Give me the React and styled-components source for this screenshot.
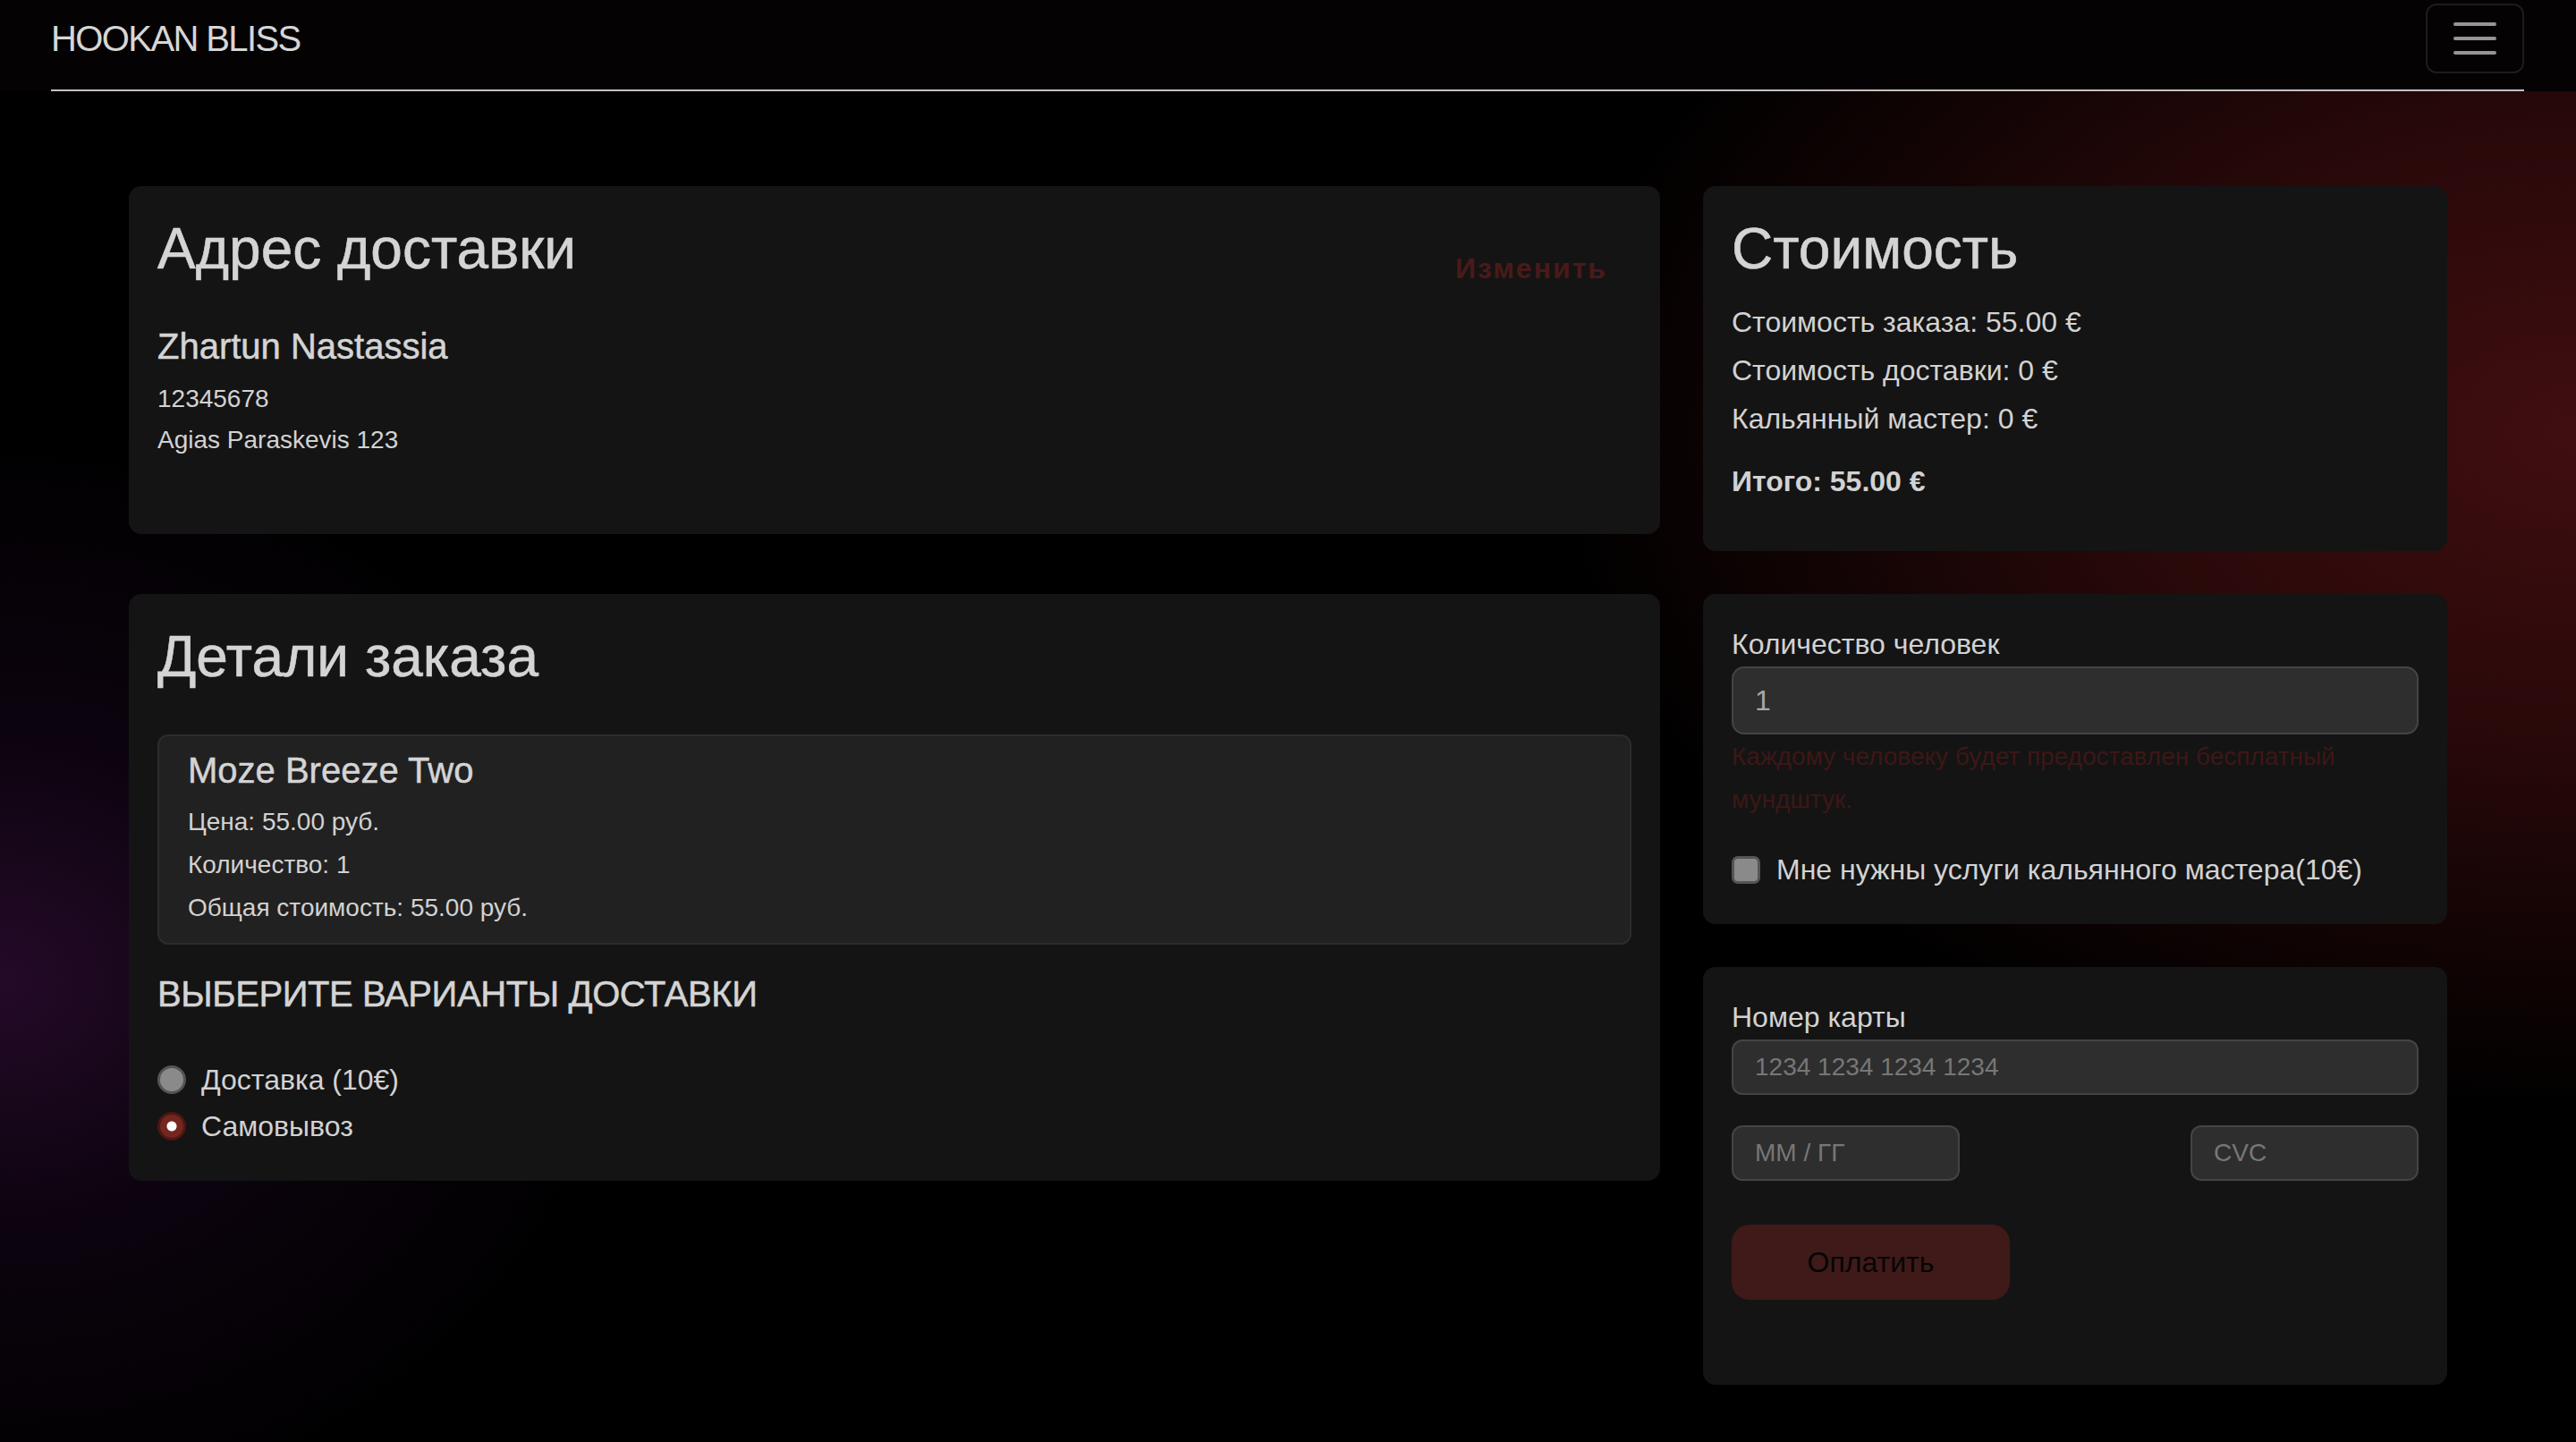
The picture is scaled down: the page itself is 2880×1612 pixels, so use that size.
import React from "react";
import styled, { createGlobalStyle } from "styled-components";

const GlobalStyle = createGlobalStyle`
  * { box-sizing: border-box; }
  body {
    margin: 0;
    background: #000;
    color: #d2d2d2;
    font-family: "Liberation Sans", Arial, sans-serif;
  }
`;

const App = () => {
  return (
    <Page>
      <GlobalStyle />
      <Navbar>
        <NavInner>
          <Brand>HOOKAN BLISS</Brand>
          <Toggler aria-label="menu">
            <svg width="60" height="60" viewBox="0 0 30 30">
              <path
                d="M4 7h22M4 15h22M4 23h22"
                stroke="rgba(255,255,255,0.58)"
                strokeWidth="2"
                strokeLinecap="round"
              />
            </svg>
          </Toggler>
        </NavInner>
      </Navbar>

      <Container>
        <Card $pb={82}>
          <CardHead>
            <Title $mb={47}>Адрес доставки</Title>
            <EditLink>Изменить</EditLink>
          </CardHead>
          <Name>Zhartun Nastassia</Name>
          <AddrLine>12345678</AddrLine>
          <AddrLine>Agias Paraskevis 123</AddrLine>
        </Card>

        <Card $pb={54}>
          <Title $mb={20}>Стоимость</Title>
          <CostLine>Стоимость заказа: 55.00 €</CostLine>
          <CostLine>Стоимость доставки: 0 €</CostLine>
          <CostLine>Кальянный мастер: 0 €</CostLine>
          <Total>Итого: 55.00 €</Total>
        </Card>

        <Card $pb={37}>
          <Title $mb={49}>Детали заказа</Title>
          <Item>
            <ItemName>Moze Breeze Two</ItemName>
            <ItemLine>Цена: 55.00 руб.</ItemLine>
            <ItemLine>Количество: 1</ItemLine>
            <ItemLine>Общая стоимость: 55.00 руб.</ItemLine>
          </Item>
          <SectionTitle>Выберите варианты доставки</SectionTitle>
          <CheckRow $gap={17} $mb={4}>
            <Radio type="radio" name="delivery" />
            Доставка (10€)
          </CheckRow>
          <CheckRow $gap={17}>
            <Radio type="radio" name="delivery" defaultChecked />
            Самовывоз
          </CheckRow>
        </Card>

        <Stack>
          <Card $pb={37}>
            <Label>Количество человек</Label>
            <BigInput type="text" defaultValue="1" />
            <Hint>Каждому человеку будет предоставлен бесплатный мундштук.</Hint>
            <CheckRow $gap={18} $mt={30}>
              <Checkbox type="checkbox" />
              Мне нужны услуги кальянного мастера(10€)
            </CheckRow>
          </Card>

          <Card $pb={95}>
            <Label>Номер карты</Label>
            <CardInput type="text" placeholder="1234 1234 1234 1234" />
            <CardRow>
              <CardInput type="text" placeholder="MM / ГГ" />
              <CardInput type="text" placeholder="CVC" />
            </CardRow>
            <PayButton>Оплатить</PayButton>
          </Card>
        </Stack>
      </Container>
    </Page>
  );
};

const Page = styled.div`
  min-height: 100vh;
  padding-bottom: 60px;
  background:
    radial-gradient(ellipse 1150px 760px at 100% 30%, rgba(64, 14, 16, 1) 0%, rgba(48, 10, 11, 0.85) 45%, rgba(0, 0, 0, 0) 100%),
    radial-gradient(ellipse 720px 620px at 0% 68%, rgba(36, 10, 40, 1) 0%, rgba(20, 5, 24, 0.6) 45%, rgba(0, 0, 0, 0) 100%),
    #000;
`;

const Navbar = styled.nav`
  padding: 0 58px 0 57px;
  background: #050203;
`;

const NavInner = styled.div`
  height: 102px;
  padding-bottom: 14px;
  display: flex;
  align-items: center;
  justify-content: space-between;
  border-bottom: 2px solid rgba(235, 225, 225, 0.85);
`;

const Brand = styled.a`
  font-size: 40px;
  letter-spacing: -1.6px;
  color: #d6d6d6;
`;

const Toggler = styled.button`
  width: 110px;
  height: 78px;
  display: flex;
  align-items: center;
  justify-content: center;
  background: transparent;
  border: 2px solid rgba(255, 255, 255, 0.1);
  border-radius: 12px;
  padding: 0;
`;

const Container = styled.main`
  width: 2592px;
  margin: 0 auto;
  padding-top: 106px;
  display: grid;
  grid-template-columns: 1712px 832px;
  column-gap: 48px;
  row-gap: 48px;
  align-items: start;
`;

const Stack = styled.div`
  display: flex;
  flex-direction: column;
  gap: 48px;
`;

const Card = styled.section`
  background: #141414;
  border-radius: 14px;
  padding: 32px 32px ${({ $pb }) => $pb}px;
`;

const CardHead = styled.div`
  display: flex;
  justify-content: space-between;
  align-items: flex-start;
`;

const Title = styled.h2`
  margin: 0 0 ${({ $mb }) => $mb}px;
  font-size: 64px;
  line-height: 76px;
  font-weight: 400;
  -webkit-text-stroke: 0.6px currentColor;
  color: #d4d4d4;
`;

const EditLink = styled.a`
  margin: 36px 27px 0 0;
  font-size: 32px;
  line-height: 48px;
  font-weight: 700;
  letter-spacing: 2px;
  color: #4a1a18;
`;

const Name = styled.h5`
  margin: 0 0 12px;
  font-size: 40px;
  line-height: 48px;
  font-weight: 400;
  -webkit-text-stroke: 0.5px currentColor;
  color: #d4d4d4;
`;

const AddrLine = styled.p`
  margin: 0;
  font-size: 28px;
  line-height: 46px;
`;

const CostLine = styled.p`
  margin: 0 0 6px;
  font-size: 32px;
  line-height: 48px;
`;

const Total = styled.p`
  margin: 22px 0 0;
  font-size: 32px;
  line-height: 48px;
  font-weight: 700;
`;

const Item = styled.div`
  background: #212121;
  border: 2px solid #2c2c2c;
  border-radius: 12px;
  padding: 14px 32px 15px;
`;

const ItemName = styled.h5`
  margin: 0 0 10px;
  font-size: 40px;
  line-height: 48px;
  font-weight: 400;
  -webkit-text-stroke: 0.5px currentColor;
  color: #d4d4d4;
`;

const ItemLine = styled.p`
  margin: 0;
  font-size: 28px;
  line-height: 48px;
`;

const SectionTitle = styled.h5`
  margin: 31px 0 48px;
  font-size: 40px;
  line-height: 48px;
  font-weight: 400;
  letter-spacing: -0.4px;
  -webkit-text-stroke: 0.5px currentColor;
  text-transform: uppercase;
  color: #d4d4d4;
`;

const CheckRow = styled.label`
  display: flex;
  align-items: center;
  gap: ${({ $gap }) => $gap}px;
  margin: ${({ $mt = 0 }) => $mt}px 0 ${({ $mb = 0 }) => $mb}px;
  font-size: 32px;
  line-height: 48px;
  color: #d2d2d2;
`;

const Radio = styled.input`
  appearance: none;
  margin: 0;
  width: 32px;
  height: 32px;
  border-radius: 50%;
  background: #8a8a8a;
  border: 3px solid #555;
  &:checked {
    background: radial-gradient(circle, #fff 0 5px, #742620 6px);
    border-color: #4e1713;
  }
`;

const Checkbox = styled.input`
  appearance: none;
  margin: 0;
  width: 32px;
  height: 31px;
  border-radius: 7px;
  background: #8a8a8a;
  border: 3px solid #555;
`;

const Label = styled.label`
  display: block;
  margin-bottom: 1px;
  font-size: 32px;
  line-height: 48px;
`;

const BigInput = styled.input`
  display: block;
  width: 100%;
  height: 76px;
  padding: 0 24px;
  background: #2e2e2e;
  border: 2px solid #444;
  border-radius: 14px;
  font-family: inherit;
  font-size: 32px;
  color: #a8a8a8;
  outline: none;
`;

const Hint = styled.div`
  margin-top: 1px;
  font-size: 28px;
  line-height: 48px;
  color: #3e1716;
`;

const CardInput = styled.input`
  display: block;
  width: 100%;
  height: 62px;
  padding: 0 24px;
  background: #2e2e2e;
  border: 2px solid #444;
  border-radius: 12px;
  font-family: inherit;
  font-size: 28px;
  color: #bbb;
  outline: none;
  &::placeholder {
    color: #777;
  }
`;

const CardRow = styled.div`
  margin-top: 34px;
  display: flex;
  justify-content: space-between;
  ${CardInput} {
    width: 255px;
  }
`;

const PayButton = styled.button`
  display: block;
  margin-top: 49px;
  width: 311px;
  height: 84px;
  border: none;
  border-radius: 20px;
  background: #3f1a19;
  font-family: inherit;
  font-size: 32px;
  color: #050505;
`;

export default App;
